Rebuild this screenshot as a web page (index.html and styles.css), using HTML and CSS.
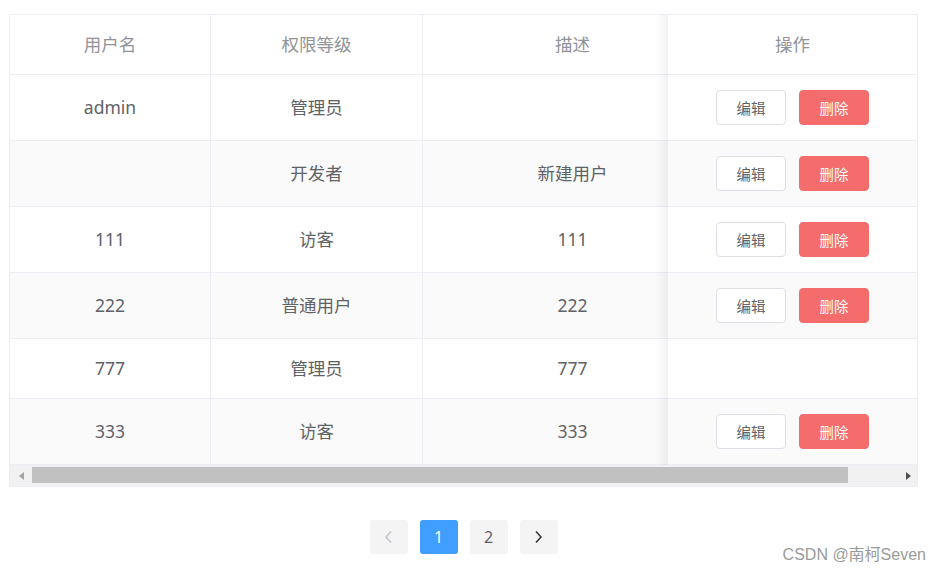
FILE: index.html
```html
<!DOCTYPE html>
<html lang="zh-CN">
<head>
  <meta charset="UTF-8">
  <meta name="viewport" content="width=device-width, initial-scale=1.0">
  <title>用户管理</title>
  <link rel="stylesheet" href="styles.css">
</head>
<body>

  <div class="page">

    <!-- User table with a fixed operations column -->
    <div class="table-box">
      <div class="table-view">
        <table class="user-table">
          <colgroup>
            <col class="col-name">
            <col class="col-level">
            <col class="col-desc">
            <col class="col-ops">
          </colgroup>
          <thead>
            <tr>
              <th>用户名</th>
              <th>权限等级</th>
              <th>描述</th>
              <th class="ops">操作</th>
            </tr>
          </thead>
          <tbody>
            <tr>
              <td>admin</td>
              <td>管理员</td>
              <td></td>
              <td class="ops"><div class="btns"><button class="btn">编辑</button><button class="btn btn-danger">删除</button></div></td>
            </tr>
            <tr>
              <td></td>
              <td>开发者</td>
              <td>新建用户</td>
              <td class="ops"><div class="btns"><button class="btn">编辑</button><button class="btn btn-danger">删除</button></div></td>
            </tr>
            <tr>
              <td>111</td>
              <td>访客</td>
              <td>111</td>
              <td class="ops"><div class="btns"><button class="btn">编辑</button><button class="btn btn-danger">删除</button></div></td>
            </tr>
            <tr>
              <td>222</td>
              <td>普通用户</td>
              <td>222</td>
              <td class="ops"><div class="btns"><button class="btn">编辑</button><button class="btn btn-danger">删除</button></div></td>
            </tr>
            <tr>
              <td>777</td>
              <td>管理员</td>
              <td>777</td>
              <td class="ops"></td>
            </tr>
            <tr>
              <td>333</td>
              <td>访客</td>
              <td>333</td>
              <td class="ops"><div class="btns"><button class="btn">编辑</button><button class="btn btn-danger">删除</button></div></td>
            </tr>
          </tbody>
        </table>
      </div>

      <!-- horizontal scrollbar -->
      <div class="scrollbar">
        <span class="sb-arrow sb-left"><i></i></span>
        <span class="sb-thumb"></span>
        <span class="sb-arrow sb-right"><i></i></span>
      </div>
    </div>

    <!-- Pagination -->
    <div class="pager">
      <button class="pager-btn disabled">
        <svg width="7" height="12" viewBox="0 0 7 12"><polyline points="6,0.5 1,6 6,11.5" fill="none" stroke="#c0c4cc" stroke-width="1.5"/></svg>
      </button>
      <button class="pager-btn active">1</button>
      <button class="pager-btn">2</button>
      <button class="pager-btn">
        <svg width="7" height="12" viewBox="0 0 7 12"><polyline points="1,0.5 6,6 1,11.5" fill="none" stroke="#303133" stroke-width="1.5"/></svg>
      </button>
    </div>

  </div>

  <div class="watermark">CSDN @南柯Seven</div>

</body>
</html>
```

FILE: styles.css
```css
body {
  margin: 0;
  font-family: "Noto Sans", "Noto Sans CJK SC", sans-serif;
  color: #606266;
  background: #fff;
}

.page {
  width: 909px;
  padding: 14px 0 0 9px;
}

/* Table */
.table-box {
  border: 1px solid #ebeef5;
}

.table-view {
  overflow: hidden;
}

.user-table {
  width: 962px;
  table-layout: fixed;
  border-collapse: separate;
  border-spacing: 0;
  font-size: 17.5px;
}

.col-name { width: 201px; }
.col-level { width: 212px; }
.col-desc { width: 300px; }
.col-ops { width: 249px; }

.user-table th,
.user-table td {
  padding: 12px 0;
  line-height: 35px;
  text-align: center;
  font-weight: 400;
  background: #fff;
  border-right: 1px solid #ebeef5;
  border-bottom: 1px solid #ebeef5;
}

.user-table th {
  color: #909399;
}

.user-table tbody tr:nth-child(even) td {
  background: #fafafa;
}

/* fixed column */
.user-table .ops {
  position: sticky;
  right: 0;
  border-right: none;
}

.user-table td.ops {
  padding: 15px 0;
}

.user-table .ops::before {
  content: "";
  position: absolute;
  top: 0;
  bottom: -1px;
  left: -12px;
  width: 12px;
  background: linear-gradient(to left, rgba(0, 0, 0, 0.055), rgba(0, 0, 0, 0));
}

.btns {
  display: flex;
  justify-content: center;
  gap: 13px;
}

.btn {
  width: 70px;
  height: 35px;
  box-sizing: border-box;
  padding: 0;
  border: 1px solid #dcdfe6;
  border-radius: 4px;
  background: #fff;
  color: #606266;
  font-family: "Noto Sans CJK SC", sans-serif;
  font-size: 14.4px;
  line-height: 33px;
  cursor: pointer;
}

.btn-danger {
  background: #f56c6c;
  border-color: #f56c6c;
  color: #fff;
}

/* Scrollbar */
.scrollbar {
  display: flex;
  align-items: flex-start;
  height: 21px;
  background: #f1f1f1;
}

.sb-thumb {
  width: 816px;
  height: 16px;
  margin-top: 2px;
  background: #c1c1c1;
}

.sb-arrow {
  display: flex;
  align-items: center;
  justify-content: center;
  height: 21px;
}

.sb-left {
  width: 22px;
}

.sb-right {
  width: 17px;
  margin-left: auto;
}

.sb-left i {
  border-top: 4px solid transparent;
  border-bottom: 4px solid transparent;
  border-right: 5px solid #a3a3a3;
}

.sb-right i {
  border-top: 4px solid transparent;
  border-bottom: 4px solid transparent;
  border-left: 5px solid #505050;
}

/* Pagination */
.pager {
  display: flex;
  justify-content: center;
  gap: 12px;
  margin-top: 33px;
}

.pager-btn {
  display: flex;
  align-items: center;
  justify-content: center;
  width: 38px;
  height: 34px;
  padding: 0;
  border: none;
  border-radius: 3px;
  background: #f4f4f5;
  color: #606266;
  font-family: "Noto Sans", sans-serif;
  font-size: 16px;
  cursor: pointer;
}

.pager-btn.active {
  background: #409eff;
  color: #fff;
}

.watermark {
  position: absolute;
  right: 13px;
  top: 541px;
  font-family: "Liberation Sans", "Noto Sans CJK SC", sans-serif;
  font-size: 16px;
  color: #9a9a9a;
}
```
